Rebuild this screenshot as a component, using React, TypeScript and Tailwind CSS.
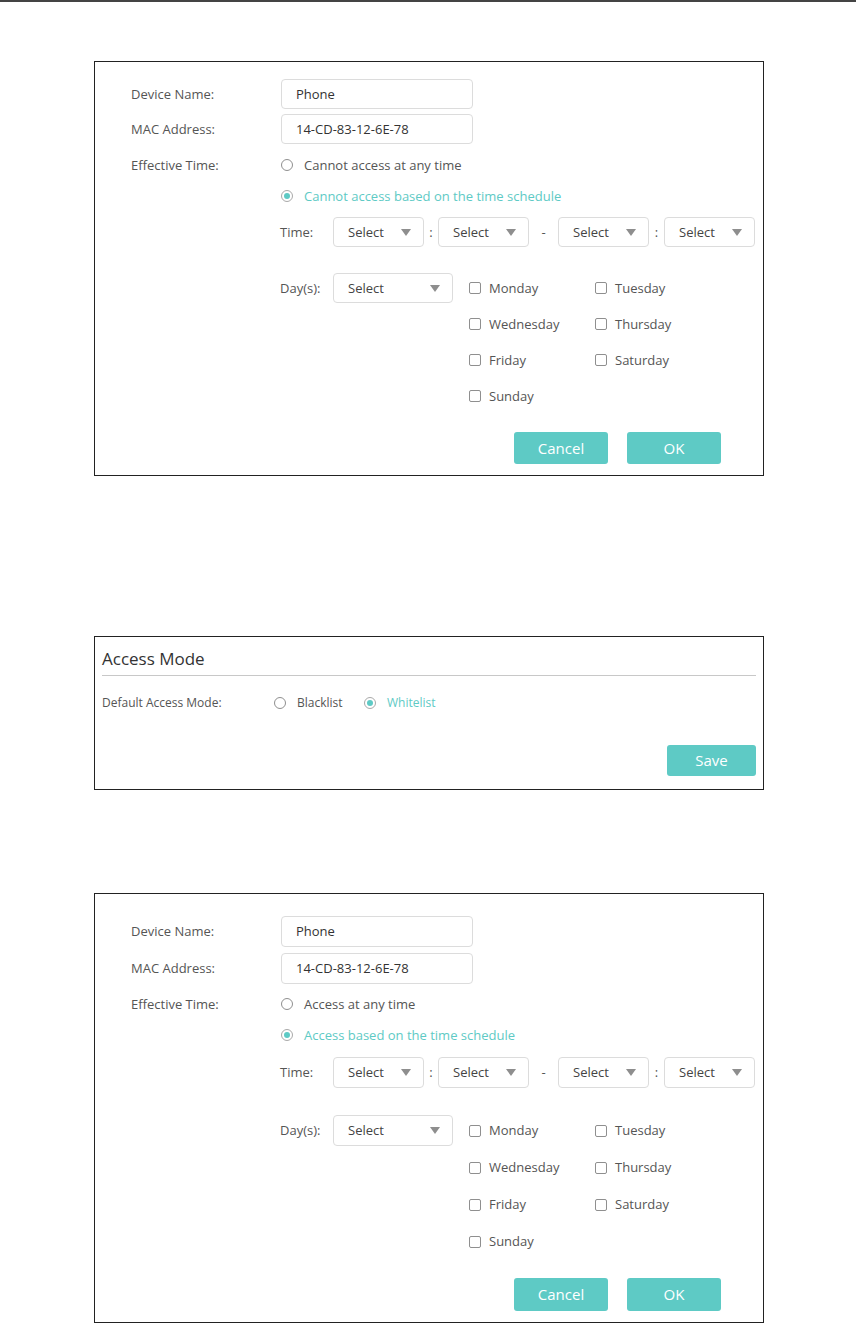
import type { ReactNode } from 'react';

const FONT = "font-['Open_Sans','Liberation_Sans',sans-serif]";

function Radio({ checked, label }: { checked?: boolean; label: string }) {
  return (
    <div className="flex items-center">
      <span
        className={`flex h-[12px] w-[12px] items-center justify-center rounded-full border ${
          checked ? 'border-[#a9a9a9]' : 'border-[#8f8f8f]'
        } bg-white`}
      >
        {checked && <span className="h-[6px] w-[6px] rounded-full bg-[#5ecac5]" />}
      </span>
      <span className={`ml-[11px] ${checked ? 'text-[#5ecac5]' : 'text-[#555]'}`}>{label}</span>
    </div>
  );
}

function Checkbox({ label }: { label: string }) {
  return (
    <div className="flex items-center">
      <span className="h-[12px] w-[12px] rounded-[2px] border border-[#8f8f8f] bg-white" />
      <span className="ml-[8px] text-[#555]">{label}</span>
    </div>
  );
}

function Select({ w, h }: { w: string; h: string }) {
  return (
    <div className={`flex ${w} ${h} items-center justify-between rounded-[4px] border border-[#dcdcdc] bg-white pl-[14px] pr-[12px] text-[#444]`}>
      <span>Select</span>
      <svg width="10" height="7" viewBox="0 0 10 7">
        <path d="M0 0 L10 0 L5 7 Z" fill="#8e8e8e" />
      </svg>
    </div>
  );
}

function Input({ value, h }: { value: string; h: string }) {
  return (
    <div className={`flex w-[192px] ${h} items-center rounded-[4px] border border-[#dcdcdc] bg-white pl-[14px] text-[#333]`}>
      {value}
    </div>
  );
}

function Row({ label, children, className = '' }: { label: string; children: ReactNode; className?: string }) {
  return (
    <div className={`flex items-center ${className}`}>
      <div className="w-[150px] shrink-0 text-[#555]">{label}</div>
      {children}
    </div>
  );
}

type Spacing = {
  top: string;
  gapInput: string;
  gapRadio1: string;
  gapRadio2: string;
  gapTime: string;
  gapDays: string;
  ctl: string;
  gapBtns: string;
  btnH: string;
  bottom: string;
};

function ScheduleForm({ any, schedule, s }: { any: string; schedule: string; s: Spacing }) {
  const days = [
    ['Monday', 'Tuesday'],
    ['Wednesday', 'Thursday'],
    ['Friday', 'Saturday'],
    ['Sunday', ''],
  ];
  return (
    <div className={`ml-[94px] w-[670px] border border-[#222] pl-[36px] ${s.top} ${s.bottom}`}>
      <Row label="Device Name:">
        <Input value="Phone" h={s.ctl} />
      </Row>
      <Row label="MAC Address:" className={s.gapInput}>
        <Input value="14-CD-83-12-6E-78" h={s.ctl} />
      </Row>
      <Row label="Effective Time:" className={`h-[26px] ${s.gapRadio1}`}>
        <Radio label={any} />
      </Row>
      <div className={`flex h-[26px] items-center pl-[150px] ${s.gapRadio2}`}>
        <Radio checked label={schedule} />
      </div>
      <div className={`flex items-center pl-[149px] ${s.gapTime}`}>
        <span className="w-[53px] text-[#555]">Time:</span>
        <Select w="w-[91px]" h={s.ctl} />
        <span className="w-[14px] text-center text-[#555]">:</span>
        <Select w="w-[91px]" h={s.ctl} />
        <span className="w-[29px] text-center text-[#555]">-</span>
        <Select w="w-[91px]" h={s.ctl} />
        <span className="w-[15px] text-center text-[#555]">:</span>
        <Select w="w-[91px]" h={s.ctl} />
      </div>
      <div className={`flex items-start pl-[149px] ${s.gapDays}`}>
        <div className={`flex ${s.ctl} w-[53px] items-center text-[#555]`}>Day(s):</div>
        <Select w="w-[120px]" h={s.ctl} />
        <div className="ml-[16px] flex flex-col gap-[6px]">
          {days.map((r, i) => (
            <div key={i} className={`flex ${s.ctl} items-center`}>
              <div className="w-[126px]">
                <Checkbox label={r[0]} />
              </div>
              {r[1] && <Checkbox label={r[1]} />}
            </div>
          ))}
        </div>
      </div>
      <div className={`flex justify-end gap-[19px] pr-[42px] ${s.gapBtns}`}>
        <button className={`w-[94px] ${s.btnH} rounded-[3px] bg-[#5ecac5] text-[15px] text-white`}>Cancel</button>
        <button className={`w-[94px] ${s.btnH} rounded-[3px] bg-[#5ecac5] text-[15px] text-white`}>OK</button>
      </div>
    </div>
  );
}

export default function App() {
  return (
    <div className={`w-[856px] bg-white text-[13px] leading-none ${FONT}`}>
      <div className="h-[2px] w-full bg-[#444]" />
      <div className="h-[59px]" />
      <ScheduleForm
        any="Cannot access at any time"
        schedule="Cannot access based on the time schedule"
        s={{
          top: 'pt-[17px]',
          gapInput: 'mt-[5px]',
          gapRadio1: 'mt-[8px]',
          gapRadio2: 'mt-[5px]',
          gapTime: 'mt-[8px]',
          gapDays: 'mt-[26px]',
          ctl: 'h-[30px]',
          gapBtns: 'mt-[21px]',
          btnH: 'h-[32px]',
          bottom: 'pb-[11px]',
        }}
      />
      <div className="h-[160px]" />
      <div className="ml-[94px] h-[154px] w-[670px] border border-[#222] px-[7px]">
        <div className="flex h-[39px] items-end border-b border-[#c8c8c8] pb-[8px] text-[17px] text-[#333]">
          Access Mode
        </div>
        <div className="mt-[14px] flex h-[26px] items-center text-[12px]">
          <span className="w-[172px] text-[#555]">Default Access Mode:</span>
          <div className="w-[90px]">
            <Radio label="Blacklist" />
          </div>
          <Radio checked label="Whitelist" />
        </div>
        <div className="mt-[29px] flex justify-end">
          <button className="h-[31px] w-[89px] rounded-[3px] bg-[#5ecac5] text-[15px] text-white">Save</button>
        </div>
      </div>
      <div className="h-[103px]" />
      <ScheduleForm
        any="Access at any time"
        schedule="Access based on the time schedule"
        s={{
          top: 'pt-[22px]',
          gapInput: 'mt-[6px]',
          gapRadio1: 'mt-[7px]',
          gapRadio2: 'mt-[5px]',
          gapTime: 'mt-[9px]',
          gapDays: 'mt-[27px]',
          ctl: 'h-[31px]',
          gapBtns: 'mt-[21px]',
          btnH: 'h-[33px]',
          bottom: 'pb-[11px]',
        }}
      />
    </div>
  );
}
